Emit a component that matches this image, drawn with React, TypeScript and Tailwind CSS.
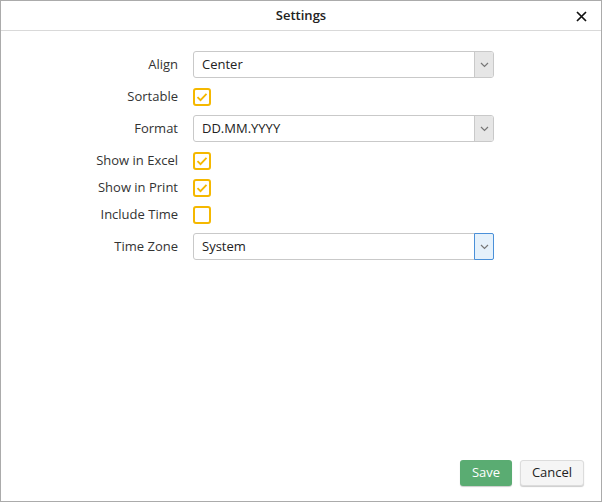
import React from "react";

function Chevron() {
  return (
    <svg width="9" height="6" viewBox="0 0 9 6" fill="none">
      <path d="M1 1l3.5 3.5L8 1" stroke="#777" strokeWidth="1.2" />
    </svg>
  );
}

function Select({ value, focused }: { value: string; focused?: boolean }) {
  return (
    <div className="flex h-[27px] w-[301px] items-stretch rounded-[3px] border border-[#c9c9c9] bg-white">
      <div className="flex flex-1 items-center pl-[8px] text-[13px] text-[#222]">{value}</div>
      <div
        className={`flex w-[19px] items-center justify-center rounded-r-[2px] ${
          focused
            ? "-my-px -mr-px w-[20px] border border-[#4a90d9] bg-[#e5f1fb]"
            : "border-l border-[#c9c9c9] bg-[#e6e6e6]"
        }`}
      >
        <Chevron />
      </div>
    </div>
  );
}

function Checkbox({ checked }: { checked?: boolean }) {
  return (
    <div className="flex h-[18px] w-[18px] items-center justify-center rounded-[3px] border-2 border-[#f5b800] bg-white">
      {checked && (
        <svg width="12" height="10" viewBox="0 0 12 10" fill="none">
          <path d="M1.5 5.2l3 3L10.5 1.8" stroke="#f5b800" strokeWidth="1.8" />
        </svg>
      )}
    </div>
  );
}

function Row({ label, children, className = "" }: { label: string; children: React.ReactNode; className?: string }) {
  return (
    <div className={`flex items-center ${className}`}>
      <div className="w-[90px] text-right text-[13px] text-[#333]">{label}</div>
      <div className="ml-[15px]">{children}</div>
    </div>
  );
}

export default function App() {
  return (
    <div
      className="flex h-[502px] w-[602px] flex-col border border-[#ababab] bg-white"
      style={{ fontFamily: '"Open Sans", "Noto Sans", sans-serif' }}
    >
      <div className="relative flex h-[30px] shrink-0 items-center justify-center border-b border-[#d9d9d9]">
        <span className="text-[13px] font-semibold text-[#222]">Settings</span>
        <button className="absolute right-[14px] top-[9px] flex h-[12px] w-[12px] items-center justify-center">
          <svg width="11" height="11" viewBox="0 0 11 11">
            <path d="M1 1l9 9M10 1l-9 9" stroke="#111" strokeWidth="1.7" />
          </svg>
        </button>
      </div>
      <div className="flex flex-1 flex-col pl-[87px] pt-[20px]">
        <Row label="Align" className="h-[27px]">
          <Select value="Center" />
        </Row>
        <Row label="Sortable" className="mt-[10px] h-[18px]">
          <Checkbox checked />
        </Row>
        <Row label="Format" className="mt-[9px] h-[27px]">
          <Select value="DD.MM.YYYY" />
        </Row>
        <Row label="Show in Excel" className="mt-[10px] h-[18px]">
          <Checkbox checked />
        </Row>
        <Row label="Show in Print" className="mt-[9px] h-[18px]">
          <Checkbox checked />
        </Row>
        <Row label="Include Time" className="mt-[9px] h-[18px]">
          <Checkbox />
        </Row>
        <Row label="Time Zone" className="mt-[9px] h-[27px]">
          <Select value="System" focused />
        </Row>
      </div>
      <div className="flex shrink-0 justify-end gap-[8px] pb-[15px] pr-[17px]">
        <button className="h-[26px] w-[52px] rounded-[3px] bg-[#5aac72] text-[13px] text-white shadow-[0_1px_1px_rgba(0,0,0,0.2)]">
          Save
        </button>
        <button className="h-[26px] w-[64px] rounded-[3px] border border-[#dcdcdc] bg-[#f5f5f5] text-[13px] text-[#222] shadow-[0_1px_1px_rgba(0,0,0,0.2)]">
          Cancel
        </button>
      </div>
    </div>
  );
}
